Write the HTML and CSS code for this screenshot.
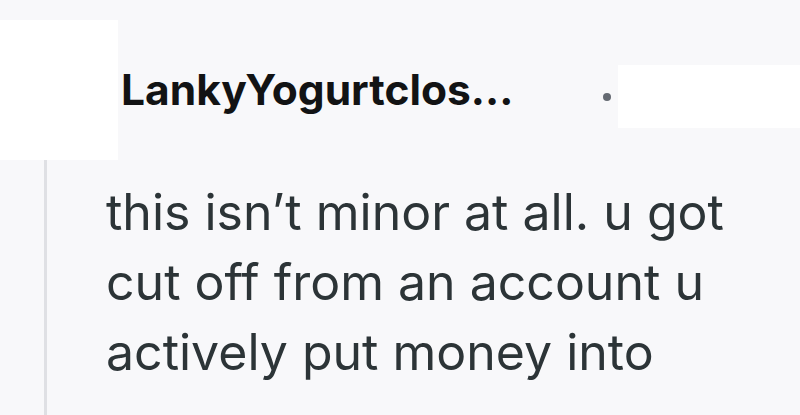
FILE: index.html
```html
<!DOCTYPE html>
<html lang="en">
<head>
<meta charset="utf-8">
<link rel="stylesheet" href="styles.css">
</head>
<body>
<div class="page">
  <header class="head">
    <div class="avatar"></div>
    <div class="name">LankyYogurtclos...</div>
    <span class="dot"></span>
    <div class="meta"></div>
  </header>
  <section class="thread">
    <div class="rail"><span class="line"></span></div>
    <p class="text">this isn’t minor at all. u got<br>cut off from an account u<br>actively put money into</p>
  </section>
</div>
</body>
</html>
```
FILE: styles.css
```css
html, body {
  margin: 0;
  padding: 0;
  background: #f8f8fa;
}
.page {
  width: 800px;
  height: 415px;
  overflow: hidden;
  display: flex;
  flex-direction: column;
  padding-top: 20px;
  box-sizing: border-box;
  font-family: Inter, Roboto, "Liberation Sans", sans-serif;
}
.head {
  display: flex;
  height: 140px;
  flex-shrink: 0;
}
.avatar {
  width: 118px;
  height: 140px;
  background: #ffffff;
  flex-shrink: 0;
}
.name {
  margin-left: 3px;
  margin-top: 48px;
  font-size: 42.5px;
  line-height: 43px;
  font-weight: 700;
  color: #121314;
  height: 43px;
}
.dot {
  width: 8px;
  height: 8px;
  border-radius: 50%;
  background: #656a72;
  margin-top: 73px;
  margin-left: auto;
  margin-right: 7px;
}
.meta {
  width: 182px;
  height: 63px;
  margin-top: 45px;
  background: #ffffff;
}
.thread {
  display: flex;
  flex: 1;
}
.rail {
  width: 106px;
  flex-shrink: 0;
  display: flex;
}
.line {
  width: 3px;
  margin-left: 44px;
  background: #dfe0e4;
}
.text {
  margin: 17px 0 0 0;
  font-size: 50px;
  line-height: 70px;
  color: #2c3437;
  font-weight: 400;
}
```
